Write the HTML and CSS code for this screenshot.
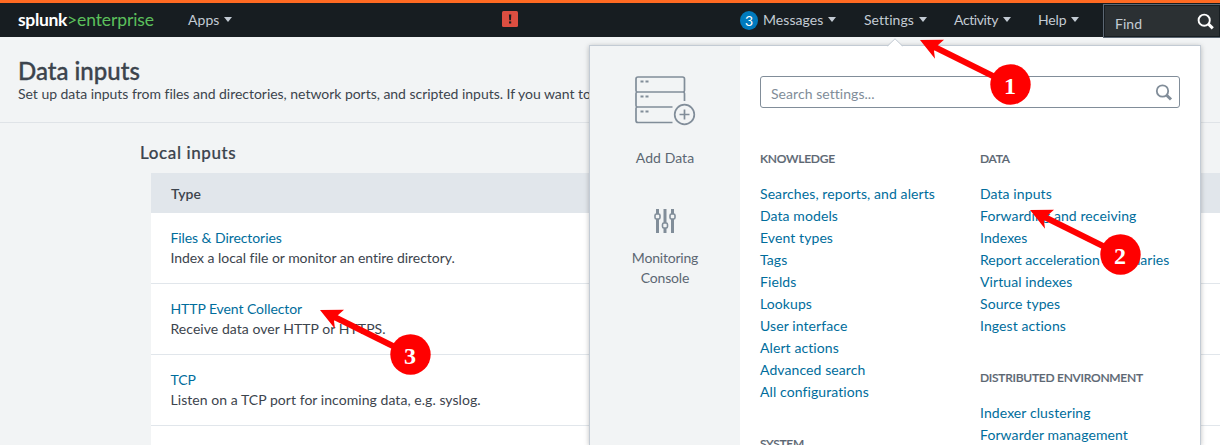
FILE: index.html
```
<!DOCTYPE html>
<html lang="en">
<head>
<meta charset="utf-8">
<title>Data inputs</title>
<link rel="stylesheet" href="styles.css">
</head>
<body>
<header class="topbar">
  <div class="brand"><span class="brand-name">splunk</span><span class="brand-gt">&gt;</span><span class="brand-product">enterprise</span></div>
  <div class="nav-item apps"><span>Apps</span><i class="caret"></i></div>
  <div class="alert"><svg width="16" height="16" viewBox="0 0 16 16"><rect width="16" height="16" rx="1.5" fill="#dc4e41"/><path d="M6.9 3.5h2.4L8.9 9.3H7.3z" fill="#171d21"/><rect x="7" y="10.4" width="2.2" height="2.1" fill="#171d21"/></svg></div>
  <nav class="nav">
    <div class="nav-item messages"><span class="badge">3</span><span>Messages</span><i class="caret"></i></div>
    <div class="nav-item settings"><span>Settings</span><i class="caret"></i></div>
    <div class="nav-item activity"><span>Activity</span><i class="caret"></i></div>
    <div class="nav-item help"><span>Help</span><i class="caret"></i></div>
  </nav>
  <div class="find"><span>Find</span>
    <svg width="18" height="18" viewBox="0 0 18 18" fill="none" stroke="#fff"><circle cx="7.2" cy="7.2" r="5.6" stroke-width="1.9"/><path d="M11.5 11.2l4.3 4.1" stroke-width="3"/></svg>
  </div>
</header>

<section class="page-head">
  <h1>Data inputs</h1>
  <p>Set up data inputs from files and directories, network ports, and scripted inputs. If you want to</p>
</section>

<main class="content">
  <h2>Local inputs</h2>
  <div class="table">
    <div class="thead">Type</div>
    <div class="row"><a>Files &amp; Directories</a><p class="dense">Index a local file or monitor an entire directory.</p></div>
    <div class="row"><a>HTTP Event Collector</a><p>Receive data over HTTP or HTTPS.</p></div>
    <div class="row"><a>TCP</a><p>Listen on a TCP port for incoming data, e.g. syslog.</p></div>
    <div class="row last"></div>
  </div>
</main>

<div class="menu">
  <svg class="pointer" width="16" height="9" viewBox="0 0 16 9"><path d="M0 9L8 1l8 8z" fill="#fff"/><path d="M0.5 8L8 .8 15.500 8" fill="none" stroke="#c3cbd4"/></svg>
  <aside class="side">
    <svg class="add-icon" width="62" height="52" viewBox="0 0 62 52" fill="none" stroke="#818d99" stroke-width="1.7">
      <path d="M49.500 25V17.500q0-1.500-1.500-1.500 1.500 0 1.500-1.500V3q0-2-2-2H3Q1 1 1 3V14.500q0 1.500 1.500 1.500Q1 16 1 17.500V29.500q0 1.500 1.500 1.500Q1 31 1 32.500V44.500q0 2 2 2H37.500M2.500 16H48M2.500 31H37.500"/>
      <path d="M5.500 5.500h3M10.500 5.500h3M5.500 20.500h3M10.500 20.500h3M5.500 35.500h3M10.500 35.500h3" stroke-width="2"/>
      <circle cx="49.500" cy="38.500" r="9.800"/><path d="M44.500 38.500h10M49.500 33.500v10"/>
    </svg>
    <span>Add Data</span>
    <svg class="console-icon" width="22" height="24" viewBox="0 0 22 24" fill="none" stroke="#818d99">
      <path d="M3.500 0v5M3.500 10v14M11 0v14M11 19v5M18.500 0v5M18.500 10v14" stroke-width="3"/>
      <rect x="1" y="5" width="5" height="5" rx="1.500" stroke-width="1.600"/><rect x="8.500" y="14" width="5" height="5" rx="1.500" stroke-width="1.600"/><rect x="16" y="5" width="5" height="5" rx="1.500" stroke-width="1.600"/>
    </svg>
    <span class="console-label">Monitoring<br>Console</span>
  </aside>
  <div class="menu-body">
    <div class="search"><span>Search settings...</span>
      <svg width="18" height="18" viewBox="0 0 18 18" fill="none" stroke="#818d99"><circle cx="7.500" cy="7" r="5.700" stroke-width="1.800"/><path d="M11.700 11.200l4.300 4.300" stroke-width="3"/></svg>
    </div>
    <div class="columns">
      <div class="col">
        <h3>KNOWLEDGE</h3>
        <ul>
          <li>Searches, reports, and alerts</li>
          <li>Data models</li>
          <li>Event types</li>
          <li>Tags</li>
          <li>Fields</li>
          <li>Lookups</li>
          <li>User interface</li>
          <li>Alert actions</li>
          <li>Advanced search</li>
          <li>All configurations</li>
        </ul>
        <h3>SYSTEM</h3>
      </div>
      <div class="col">
        <h3>DATA</h3>
        <ul>
          <li>Data inputs</li>
          <li>Forwarding and receiving</li>
          <li>Indexes</li>
          <li class="dense">Report acceleration summaries</li>
          <li>Virtual indexes</li>
          <li>Source types</li>
          <li>Ingest actions</li>
        </ul>
        <h3>DISTRIBUTED ENVIRONMENT</h3>
        <ul>
          <li>Indexer clustering</li>
          <li>Forwarder management</li>
        </ul>
      </div>
    </div>
  </div>
</div>

<svg class="markers" width="1220" height="445" viewBox="0 0 1220 445">
  <defs>
    <g id="arrow"><path d="M15 7.300L90 44.500" stroke="#f00" stroke-width="6"/><path d="M0 0L24-.3 17 6 14 11 15 18.800z" fill="#f00"/><circle cx="90.500" cy="44.500" r="20.200" fill="#f00"/></g>
  </defs>
  <use href="#arrow" x="920" y="40"/><text x="1010" y="94">1</text>
  <use href="#arrow" x="1030" y="210"/><text x="1120" y="264">2</text>
  <use href="#arrow" x="320" y="310"/><text x="410" y="364">3</text>
</svg>
</body>
</html>
```
FILE: styles.css
```
* { box-sizing: border-box; }
body, h1, h2, h3, p, ul { margin: 0; padding: 0; }
html { overflow: hidden; }
body {
  position: relative;
  width: 1220px;
  height: 445px;
  overflow: hidden;
  background: #f2f4f5;
  color: #3c444d;
  font: 14px/20px Lato, "Open Sans", sans-serif;
  letter-spacing: .05px;
}
ul { list-style: none; }
span, li, p, h1, h2, h3, a { white-space: nowrap; }

.topbar {
  display: flex;
  height: 37px;
  border-top: 3px solid #ff6a22;
  background: #171d21;
  color: #c3cbd4;
}
.brand { width: 170px; padding: 5px 0 0 18px; font-size: 17.5px; line-height: 24px; letter-spacing: -.1px; }
.brand-name { color: #fff; font-weight: 700; letter-spacing: -.35px; }
.brand-gt, .brand-product { color: #5cc05c; }
.nav-item { display: flex; align-items: center; height: 34px; }
.caret { width: 0; height: 0; margin: 0 0 1px 5px; border: 4px solid transparent; border-top: 5px solid #c3cbd4; border-bottom: 0; }
.apps { width: 332px; padding-left: 18px; }
.alert { width: 238px; padding-top: 8px; }
.nav { display: flex; width: 363px; }
.messages { width: 124px; }
.settings { width: 90px; }
.activity { width: 84px; letter-spacing: -.4px; }
.help { letter-spacing: -.15px; }
.badge { width: 18px; height: 19px; margin-right: 5px; border-radius: 50%; background: #007abd; color: #fff; line-height: 19px; text-align: center; }
.find {
  display: flex;
  justify-content: space-between;
  width: 117px;
  height: 34px;
  margin-top: 1px;
  padding: 9px 5px 0 11px;
  border: 1px solid #5c6773;
  border-right: 0;
  background: #2b3033;
  box-shadow: inset 0 0 0 1px #171d21;
}
.find svg { margin-top: -1px; }

.page-head { height: 86px; padding: 20px 0 0 18px; border-bottom: 1px solid #dfe3e7; }
h1 { font-size: 24px; font-weight: 500; line-height: 28px; letter-spacing: 0; -webkit-text-stroke: .35px currentColor; }
.page-head p { line-height: 18px; letter-spacing: -.03px; }
.content { padding: 20px 0 0 140px; }
h2 { font-size: 17px; font-weight: 500; line-height: 20px; letter-spacing: .6px; -webkit-text-stroke: .2px currentColor; }
.table { margin: 10px 0 0 11px; background: #fff; }
.thead { height: 40px; padding-left: 20px; background: #e1e6eb; font-weight: 600; line-height: 41px; }
.row { height: 71px; padding: 15px 0 0 19.5px; border-bottom: 1px solid #e1e6eb; }
.row.last { height: 19px; border-bottom: 0; }
.row p.dense { letter-spacing: -.04px; }
.row a { display: block; color: #006d9c; letter-spacing: -.08px; }

.menu {
  position: absolute;
  top: 45px;
  left: 589px;
  display: flex;
  width: 612px;
  height: 400px;
  border: 1px solid #c3cbd4;
  border-bottom: 0;
  background: #fff;
  box-shadow: 0 1px 5px rgba(0, 0, 0, .25);
}
.pointer { position: absolute; top: -8px; left: 297px; }
.side {
  display: flex;
  flex: 0 0 150px;
  flex-direction: column;
  align-items: center;
  padding-top: 30px;
  background: #f2f4f5;
  color: #5c6773;
  text-align: center;
}
.add-icon { margin: 0 0 20px 1px; }
.console-icon { margin: 41px 0 15px; }
.console-label { letter-spacing: -.2px; }
.menu-body { flex: 1; height: 399px; padding: 30px 20px 0; overflow: hidden; }
.search {
  display: flex;
  justify-content: space-between;
  width: 420px;
  height: 32px;
  padding: 7px 6px 0 10px;
  border: 1px solid #818d99;
  border-radius: 3px;
  color: #818d99;
}
.columns { display: flex; padding-top: 41px; }
.col { flex: 0 0 220px; }
h3 { color: #5c6773; font-size: 12px; font-weight: 600; line-height: 20px; letter-spacing: -.27px; -webkit-text-stroke: .15px currentColor; }
.col ul { margin: 14px 0 31px; }
.col li { height: 22px; color: #006d9c; line-height: 22px; letter-spacing: .09px; }
.col li.dense { letter-spacing: .02px; }

.markers { position: absolute; top: 0; left: 0; }
.markers text { fill: #fff; font: 700 24px "Liberation Serif", serif; letter-spacing: 0; text-anchor: middle; }
```
